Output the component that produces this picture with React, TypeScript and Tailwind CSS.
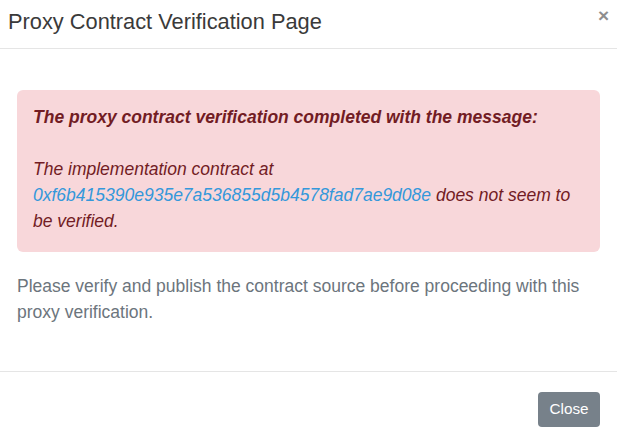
export default function App() {
  return (
    <div className="w-[617px] h-[443px] bg-white overflow-hidden flex flex-col" style={{ fontFamily: '"Liberation Sans", Arial, sans-serif' }}>
      <div className="h-[49px] border-b border-[#e5e5e5] flex items-start justify-between pl-[8px] pr-[8px]">
        <h1 className="text-[21.8px] leading-[44px] text-[#3a3a3a] font-normal">Proxy Contract Verification Page</h1>
        <span className="text-[#8e8e8e] text-[19px] font-bold leading-[32px]">×</span>
      </div>
      <div className="px-[17px] pt-[41px] pb-[46px]">
        <div className="bg-[#f8d7da] rounded-[6px] px-[16px] pt-[14px] pb-[18px] text-[#721c24] text-[17.5px] leading-[26px] italic">
          <p className="font-bold">The proxy contract verification completed with the message:</p>
          <p className="mt-[26px]">
            The implementation contract at<br />
            <span className="text-[#3498db]">0xf6b415390e935e7a536855d5b4578fad7ae9d08e</span> does not seem to be verified.
          </p>
        </div>
        <p className="mt-[21px] text-[17.5px] leading-[26px] text-[#6c757d]">
          Please verify and publish the contract source before proceeding with this proxy verification.
        </p>
      </div>
      <div className="border-t border-[#e5e5e5] flex justify-end pr-[17px] pt-[20px]">
        <button className="bg-[#77818a] text-white text-[15.3px] rounded-[4px] w-[62px] h-[35px]">Close</button>
      </div>
    </div>
  );
}
